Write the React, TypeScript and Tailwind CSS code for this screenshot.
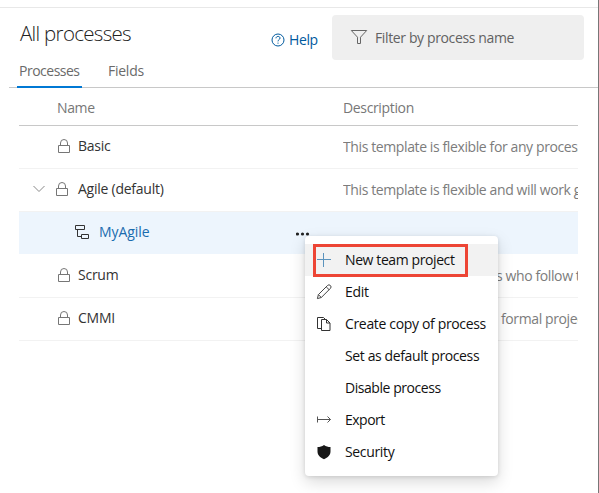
import type { ReactNode } from "react";

function Lock() {
  return (
    <svg width="12" height="15" viewBox="0 0 12 15" fill="none" stroke="#767676" className="block">
      <path d="M.5 6.5h11v7H.5zM2.5 6.5V4a3.5 3.5 0 0 1 7 0v2.5" />
    </svg>
  );
}

function Inherited() {
  return (
    <svg width="16" height="16" viewBox="0 0 16 16" fill="none" stroke="#333" className="block">
      <path d="M1.5 1.5h9v4h-9zM7.5 10.5h7v4h-7zM3.5 5.5v7h4" />
    </svg>
  );
}

function Row({ children, description, selected }: { children: ReactNode; description?: ReactNode; selected?: boolean }) {
  return (
    <div className={`flex h-[43px] w-[559px] items-center overflow-hidden border-b ${selected ? "border-white bg-[#edf5fd] bg-clip-padding" : "border-[#f2f2f2]"}`}>
      <div className="flex h-full w-[324px] shrink-0 items-center pb-[2px]">{children}</div>
      <div className="flex-1 overflow-hidden whitespace-nowrap tracking-[-0.39px] text-[#7c7c7c]">{description}</div>
    </div>
  );
}

const items: { label: string; tracking: string; icon?: ReactNode }[] = [
  { label: "New team project", tracking: "tracking-[-0.4px]", icon: <path d="M7.5 1v14M1 7.5h14" stroke="#5b93bd" /> },
  {
    label: "Edit",
    tracking: "tracking-[-0.3px]",
    icon: <path d="M1.4 14.6l1-4L11.5 1.5a1.9 1.9 0 0 1 2.9 2.9L5.3 13.5zM2.4 10.6l2.9 2.9M10.2 2.8l2.9 2.9" stroke="#444" />,
  },
  {
    label: "Create copy of process",
    tracking: "tracking-[-0.34px]",
    icon: <path d="M5.5 12.5h-4v-11h6l2 2M5.5 3.5h5l3.5 3.5v7.5H5.5zM10.5 3.5V7H14" stroke="#333" />,
  },
  { label: "Set as default process", tracking: "tracking-[-0.38px]" },
  { label: "Disable process", tracking: "tracking-[-0.45px]" },
  { label: "Export", tracking: "tracking-[-0.5px]", icon: <path d="M1.5 4.5v6M2 7.5h12.5M11.5 4.5l3 3-3 3" stroke="#555" /> },
  {
    label: "Security",
    tracking: "tracking-[-0.35px]",
    icon: <path d="M8 1c2 1.4 4 2 6.5 2v4.5c0 3.5-2.5 6-6.5 7.8-4-1.8-6.5-4.3-6.5-7.8V3C4 3 6 2.4 8 1z" fill="#171717" />,
  },
];

export default function App() {
  return (
    <div className="relative h-[493px] w-[599px] overflow-hidden border-r border-[#777] bg-white pt-[7px] font-['Open_Sans','Noto_Sans',sans-serif] text-[14px] leading-5 tracking-[-0.25px] text-[#333]">
      <div className="h-px bg-[#e8e8e8]" />
      <header className="flex h-[52px] pt-[7px] pl-5">
        <h1 className="mt-1 w-[251px] whitespace-nowrap text-[20.5px] font-light leading-7 tracking-[-0.7px] text-[#222]">All processes</h1>
        <a className="mt-[15px] flex h-5 w-[61px] items-center gap-1 tracking-[-0.4px] text-[#005a9e]">
          <svg width="14" height="14" viewBox="0 0 14 14" fill="none" stroke="#005a9e">
            <circle cx="7" cy="7" r="6" />
            <path d="M5 5.3c0-2.5 4-2.5 4-.2C9 6.7 7 6.5 7 8.4M7 9.6v1.1" />
          </svg>
          Help
        </a>
        <div className="flex h-[45px] w-[252px] items-center rounded bg-[#efefef] pl-[18px] tracking-[-0.37px] text-[#626262]">
          <svg width="18" height="17" viewBox="0 0 18 17" fill="none" stroke="#666" className="mr-[7px]">
            <path d="M1.3 1.5h15.4L10.5 8.2v6.3h-3V8.2z" />
          </svg>
          Filter by process name
        </div>
      </header>
      <nav className="ml-[9px] flex h-[28px] border-b border-[#c8c8c8] pl-2 text-[#6a6a6a]">
        <div className="h-[28px] w-[65px] border-b-2 border-[#0078d4] pl-[2px] pt-px font-medium tracking-[-0.5px]">Processes</div>
        <div className="ml-[26px] pt-px">Fields</div>
      </nav>
      <main className="ml-[19px]">
        <div className="flex h-[38px] w-[559px] items-center border-b border-[#c8c8c8] pl-[38px] pt-[3px] tracking-[-0.35px] text-[#777]">
          <span className="w-[286px]">Name</span>
          <span>Description</span>
        </div>
        <Row description="This template is flexible for any process">
          <span className="ml-[39px] mr-[8px]"><Lock /></span>Basic
        </Row>
        <Row description="This template is flexible and will work great">
          <svg width="12" height="8" viewBox="0 0 12 8" fill="none" stroke="#888" className="ml-[14px] mr-[11px]">
            <path d="M.5 1l5.5 5.5L11.5 1" />
          </svg>
          <span className="mr-[10px]"><Lock /></span>Agile (default)
        </Row>
        <Row selected>
          <span className="ml-[55px] mr-[9px]"><Inherited /></span>
          <span className="w-[197px] tracking-[-0.05px] text-[#1a6cae]">MyAgile</span>
          <svg width="14" height="4" viewBox="0 0 14 4" fill="#222" className="mt-1">
            <circle cx="1.5" cy="2" r="1.6" /><circle cx="6.5" cy="2" r="1.6" /><circle cx="11.5" cy="2" r="1.6" />
          </svg>
        </Row>
        <Row description={<span className="ml-[153px]">s who follow the</span>}>
          <span className="ml-[39px] mr-[8px]"><Lock /></span>Scrum
        </Row>
        <Row description={<span className="ml-[158px]">formal project</span>}>
          <span className="ml-[39px] mr-[8px]"><Lock /></span>CMMI
        </Row>
      </main>
      <div className="absolute left-[305px] top-[236px] h-[240px] w-[193px] rounded bg-white py-2 text-[#111] shadow-[0_6px_16px_rgba(0,0,0,0.15),0_1px_4px_rgba(0,0,0,0.12)]">
        {items.map((item, i) => (
          <div key={item.label} className={`flex h-8 items-center whitespace-nowrap pl-[11px] ${item.tracking} ${i === 0 ? "bg-[#f2f2f2]" : ""}`}>
            <svg width="16" height="16" viewBox="0 0 16 16" fill="none" className="mr-[13px]">{item.icon}</svg>
            {item.label}
          </div>
        ))}
        <div className="absolute left-2 top-2 h-[33px] w-[155px] border-3 border-[#ed4535]" />
      </div>
    </div>
  );
}
